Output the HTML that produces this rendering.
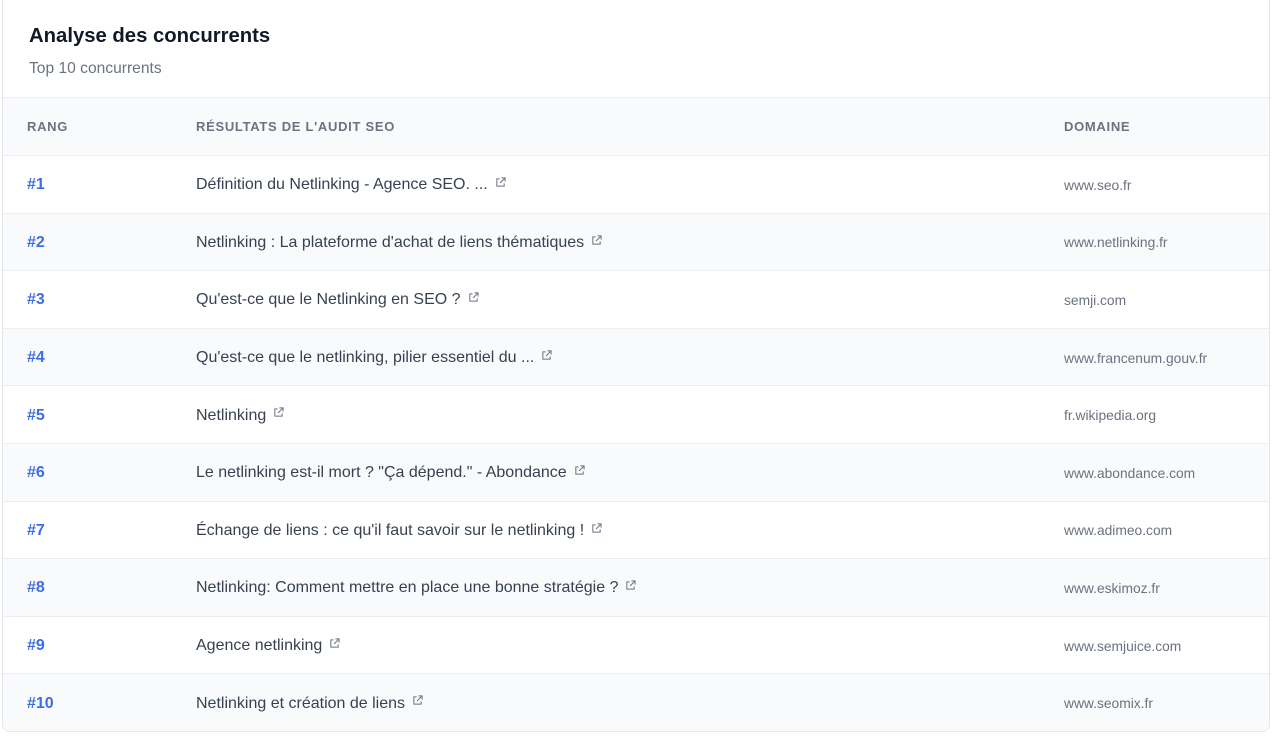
<!DOCTYPE html><html><head><style>
body{margin:0;background:#fff;font-family:"Liberation Sans",sans-serif;width:1272px;height:737px;overflow:hidden}
.card{position:absolute;left:2px;top:0;width:1266px;height:731px;border:1px solid #e5e7eb;border-top:none;border-radius:0 0 8px 8px;overflow:hidden}
h1{position:absolute;left:26px;top:25px;margin:0;font-size:20.3px;font-weight:bold;color:#111827}
.sub{position:absolute;left:26px;top:60px;font-size:15.6px;color:#6b7280}
table{position:absolute;top:97px;left:0;width:100%;border-collapse:collapse}
th{height:57px;background:#f9fafb;font-size:13px;letter-spacing:.7px;color:#6b7280;text-align:left;font-weight:bold;border-top:1px solid #eceef1;border-bottom:1px solid #eceef1;padding:0}
td{height:54.6px;padding:2px 0 0;border-bottom:1px solid #eceef1;font-size:16px;color:#374151}
tr:nth-child(even) td{background:#f9fafb}
.r{padding-left:24px;width:169px;color:#3b6ee6;font-weight:bold}
.d{width:205px;font-size:13.8px;color:#6b7280}
.i{display:inline-block;vertical-align:middle;margin-left:7px;margin-top:-5px}
</style></head><body><div class="card">
<h1>Analyse des concurrents</h1><div class="sub">Top 10 concurrents</div>
<table><thead><tr><th style="padding-left:24px">RANG</th><th>RÉSULTATS DE L'AUDIT SEO</th><th>DOMAINE</th></tr></thead><tbody>
<tr><td class="r">#1</td><td>Définition du Netlinking - Agence SEO. ...<svg class="i" width="11" height="11" viewBox="0 0 12 12" fill="none" stroke="#6b7280" stroke-width="1.1"><path d="M5 2H2v8h8V7M7 1h4v4M11 1L5.5 6.5"/></svg></td><td class="d">www.seo.fr</td></tr>
<tr><td class="r">#2</td><td>Netlinking : La plateforme d'achat de liens thématiques<svg class="i" width="11" height="11" viewBox="0 0 12 12" fill="none" stroke="#6b7280" stroke-width="1.1"><path d="M5 2H2v8h8V7M7 1h4v4M11 1L5.5 6.5"/></svg></td><td class="d">www.netlinking.fr</td></tr>
<tr><td class="r">#3</td><td>Qu'est-ce que le Netlinking en SEO ?<svg class="i" width="11" height="11" viewBox="0 0 12 12" fill="none" stroke="#6b7280" stroke-width="1.1"><path d="M5 2H2v8h8V7M7 1h4v4M11 1L5.5 6.5"/></svg></td><td class="d">semji.com</td></tr>
<tr><td class="r">#4</td><td>Qu'est-ce que le netlinking, pilier essentiel du ...<svg class="i" width="11" height="11" viewBox="0 0 12 12" fill="none" stroke="#6b7280" stroke-width="1.1"><path d="M5 2H2v8h8V7M7 1h4v4M11 1L5.5 6.5"/></svg></td><td class="d">www.francenum.gouv.fr</td></tr>
<tr><td class="r">#5</td><td>Netlinking<svg class="i" width="11" height="11" viewBox="0 0 12 12" fill="none" stroke="#6b7280" stroke-width="1.1"><path d="M5 2H2v8h8V7M7 1h4v4M11 1L5.5 6.5"/></svg></td><td class="d">fr.wikipedia.org</td></tr>
<tr><td class="r">#6</td><td>Le netlinking est-il mort ? "Ça dépend." - Abondance<svg class="i" width="11" height="11" viewBox="0 0 12 12" fill="none" stroke="#6b7280" stroke-width="1.1"><path d="M5 2H2v8h8V7M7 1h4v4M11 1L5.5 6.5"/></svg></td><td class="d">www.abondance.com</td></tr>
<tr><td class="r">#7</td><td>Échange de liens : ce qu'il faut savoir sur le netlinking !<svg class="i" width="11" height="11" viewBox="0 0 12 12" fill="none" stroke="#6b7280" stroke-width="1.1"><path d="M5 2H2v8h8V7M7 1h4v4M11 1L5.5 6.5"/></svg></td><td class="d">www.adimeo.com</td></tr>
<tr><td class="r">#8</td><td>Netlinking: Comment mettre en place une bonne stratégie ?<svg class="i" width="11" height="11" viewBox="0 0 12 12" fill="none" stroke="#6b7280" stroke-width="1.1"><path d="M5 2H2v8h8V7M7 1h4v4M11 1L5.5 6.5"/></svg></td><td class="d">www.eskimoz.fr</td></tr>
<tr><td class="r">#9</td><td>Agence netlinking<svg class="i" width="11" height="11" viewBox="0 0 12 12" fill="none" stroke="#6b7280" stroke-width="1.1"><path d="M5 2H2v8h8V7M7 1h4v4M11 1L5.5 6.5"/></svg></td><td class="d">www.semjuice.com</td></tr>
<tr><td class="r">#10</td><td>Netlinking et création de liens<svg class="i" width="11" height="11" viewBox="0 0 12 12" fill="none" stroke="#6b7280" stroke-width="1.1"><path d="M5 2H2v8h8V7M7 1h4v4M11 1L5.5 6.5"/></svg></td><td class="d">www.seomix.fr</td></tr>
</tbody></table></div></body></html>
